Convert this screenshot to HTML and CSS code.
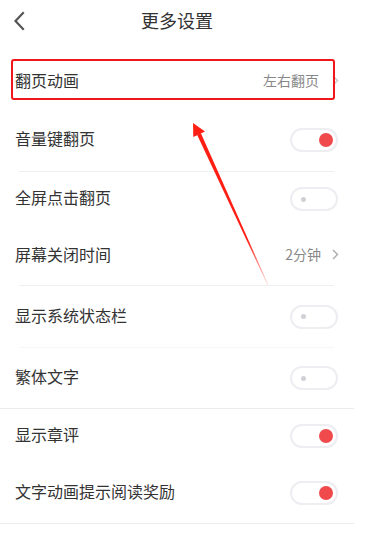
FILE: index.html
```html
<!DOCTYPE html>
<html lang="zh">
<head>
<meta charset="utf-8">
<title>更多设置</title>
<link rel="stylesheet" href="styles.css">
</head>
<body>
<div class="page">
  <header class="header">
    <svg class="back" width="12" height="20" viewBox="0 0 12 20"><path d="M10 2 L2.5 10 L10 18" fill="none" stroke="#555" stroke-width="2.2" stroke-linecap="square"/></svg>
    <h1 class="title">更多设置</h1>
  </header>
  <main class="list">
    <div class="row h54">
      <span class="label">翻页动画</span>
      <span class="value">左右翻页<svg class="chev chev-light" width="7" height="11" viewBox="0 0 7 11"><path d="M1 1 L5.5 5.5 L1 10" fill="none" stroke="#c8c8c8" stroke-width="1.4"/></svg></span>
    </div>
    <div class="row h62">
      <span class="label">音量键翻页</span>
      <span class="toggle on"><span class="dot"></span></span>
    </div>
    <div class="divider inset"></div>
    <div class="row h54">
      <span class="label">全屏点击翻页</span>
      <span class="toggle off"><span class="dot"></span></span>
    </div>
    <div class="row h59">
      <span class="label">屏幕关闭时间</span>
      <span class="value">2分钟<svg class="chev" width="7" height="11" viewBox="0 0 7 11"><path d="M1 1 L5.5 5.5 L1 10" fill="none" stroke="#aaa" stroke-width="1.4"/></svg></span>
    </div>
    <div class="divider inset"></div>
    <div class="row h61">
      <span class="label">显示系统状态栏</span>
      <span class="toggle off"><span class="dot"></span></span>
    </div>
    <div class="divider inset faint"></div>
    <div class="row h60">
      <span class="label">繁体文字</span>
      <span class="toggle off"><span class="dot"></span></span>
    </div>
    <div class="divider full"></div>
    <div class="row h53">
      <span class="label">显示章评</span>
      <span class="toggle on"><span class="dot"></span></span>
    </div>
    <div class="row h61">
      <span class="label">文字动画提示阅读奖励</span>
      <span class="toggle on"><span class="dot"></span></span>
    </div>
    <div class="divider full"></div>
  </main>
  <div class="highlight"></div>
  <svg class="arrow" width="371" height="544" viewBox="0 0 371 544">
    <defs>
      <linearGradient id="fade" gradientUnits="userSpaceOnUse" x1="199" y1="134" x2="268" y2="285">
        <stop offset="0" stop-color="#ff1e14" stop-opacity="1"/>
        <stop offset="0.7" stop-color="#ff1e14" stop-opacity="1"/>
        <stop offset="1" stop-color="#ff1e14" stop-opacity="0.15"/>
      </linearGradient>
    </defs>
    <polygon points="197.2,134.9 200.8,133.1 268.4,284.9 267.7,285.2" fill="url(#fade)"/>
    <polygon points="193,123 205,131.5 193.3,137" fill="#ff1e14"/>
  </svg>
</div>
</body>
</html>
```

FILE: styles.css
```css
* { box-sizing: border-box; }
html, body { margin: 0; padding: 0; background: #fff; }
body {
  font-family: "Noto Sans CJK SC", "Noto Sans", sans-serif;
  color: #333;
}
.page {
  position: relative;
  width: 354px;
  height: 544px;
  overflow: visible;
}
.header {
  height: 40px;
  display: flex;
  align-items: center;
  justify-content: center;
  position: relative;
}
.back {
  position: absolute;
  left: 13px;
  top: 11px;
}
.title {
  margin: 0;
  font-size: 18px;
  font-weight: normal;
  color: #333;
  line-height: 1;
}
.list {
  margin-top: 15px;
}
.row {
  display: flex;
  align-items: center;
  justify-content: space-between;
  padding: 0 16px 0 15px;
}
.h53 { height: 53px; }
.h54 { height: 54px; }
.h59 { height: 59px; }
.h60 { height: 60px; }
.h61 { height: 61px; }
.h62 { height: 62px; }
.label {
  font-size: 16px;
  line-height: 20px;
  color: #333;
  margin-top: -4px;
}
.value {
  display: flex;
  align-items: center;
  font-size: 14px;
  color: #888;
  margin-top: -4px;
  margin-right: -1px;
}
.chev { margin-left: 11px; margin-top: 1px; }
.chev-light { margin-left: 13px; }
.toggle {
  width: 48px;
  height: 24px;
  border: 2px solid #ededf2;
  border-radius: 12px;
  background: #fff;
  display: flex;
  align-items: center;
}
.toggle.on { justify-content: flex-end; padding-right: 3px; }
.toggle.off { justify-content: flex-start; padding-left: 9px; }
.toggle.on .dot {
  width: 14px;
  height: 14px;
  border-radius: 50%;
  background: #f04a4c;
}
.toggle.off .dot {
  width: 5px;
  height: 5px;
  border-radius: 50%;
  background: #d0d0d6;
}
.divider { height: 1px; }
.divider.inset { margin: 0 20px 0 19px; background: #efefef; }
.divider.faint { background: #f6f6f6; }
.divider.full { background: #ececec; }
.highlight {
  position: absolute;
  left: 11px;
  top: 59px;
  width: 324px;
  height: 41px;
  border: 2.5px solid #f0161a;
  border-radius: 3px;
}
.arrow {
  position: absolute;
  left: 0;
  top: 0;
  pointer-events: none;
}
```
